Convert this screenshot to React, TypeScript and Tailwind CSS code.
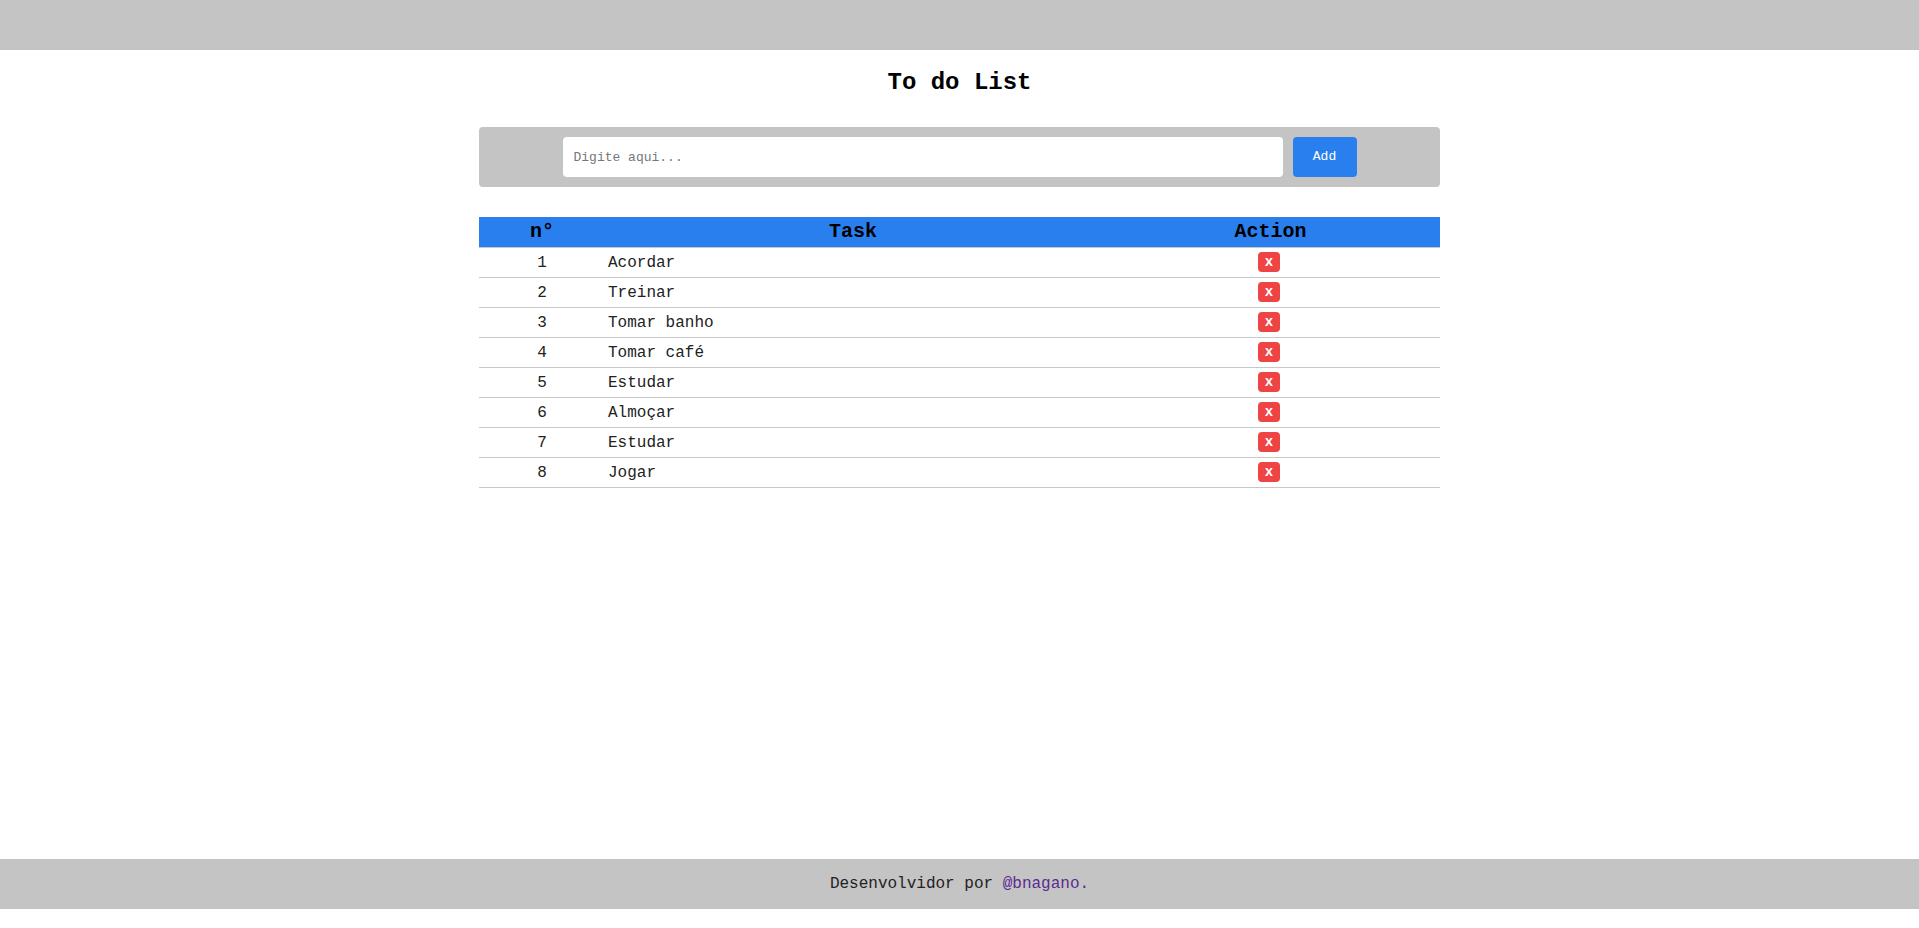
import { useState } from "react"

type Task = {
  id: number
  title: string
}

const initialTasks: Task[] = [
  { id: 1, title: "Acordar" },
  { id: 2, title: "Treinar" },
  { id: 3, title: "Tomar banho" },
  { id: 4, title: "Tomar café" },
  { id: 5, title: "Estudar" },
  { id: 6, title: "Almoçar" },
  { id: 7, title: "Estudar" },
  { id: 8, title: "Jogar" },
]

export default function App() {
  const [tasks, setTasks] = useState<Task[]>(initialTasks)
  const [text, setText] = useState("")

  const addTask = () => {
    if (!text.trim()) return
    setTasks([...tasks, { id: Date.now(), title: text.trim() }])
    setText("")
  }

  const removeTask = (id: number) => {
    setTasks(tasks.filter((t) => t.id !== id))
  }

  return (
    <div className="bg-white text-[#222] font-['Liberation_Mono','Courier_New',monospace]">
      <header className="h-[50px] bg-[#c4c4c4]" />

      <main className="min-h-[809px] pt-[19px]">
        <h1 className="text-center text-[24px] leading-[28px] font-bold text-black">To do List</h1>

        <div className="mx-auto mt-[30px] w-[961px]">
          <div className="flex h-[60px] items-center justify-center gap-[10px] rounded-[4px] bg-[#c4c4c4]">
            <input
              value={text}
              onChange={(e) => setText(e.target.value)}
              onKeyDown={(e) => e.key === "Enter" && addTask()}
              placeholder="Digite aqui..."
              className="h-[40px] w-[720px] rounded-[4px] bg-white px-[11px] text-[13px] outline-none placeholder:text-[#777]"
            />
            <button
              onClick={addTask}
              className="h-[40px] w-[64px] rounded-[4px] bg-[#2a7fef] text-[13px] text-white"
            >
              Add
            </button>
          </div>

          <table className="mt-[30px] w-full table-fixed border-collapse">
            <colgroup>
              <col className="w-[126px]" />
              <col className="w-[496px]" />
              <col />
            </colgroup>
            <thead>
              <tr className="bg-[#2a7fef] text-[20px] text-black">
                <th className="h-[30px] border-b border-[#c8c8c8] p-0 font-bold">n°</th>
                <th className="h-[30px] border-b border-[#c8c8c8] p-0 font-bold">Task</th>
                <th className="h-[30px] border-b border-[#c8c8c8] p-0 font-bold">Action</th>
              </tr>
            </thead>
            <tbody className="text-[16px]">
              {tasks.map((task, index) => (
                <tr key={task.id}>
                  <td className="h-[30px] border-b border-[#c8c8c8] p-0 text-center">{index + 1}</td>
                  <td className="h-[30px] border-b border-[#c8c8c8] p-0 pl-[3px]">{task.title}</td>
                  <td className="h-[30px] border-b border-[#c8c8c8] p-0 pr-[3px] text-center">
                    <button
                      onClick={() => removeTask(task.id)}
                      className="inline-flex h-[20px] w-[22px] items-center justify-center rounded-[4px] bg-[#ef4444] align-middle text-[14px] leading-none font-bold text-white"
                    >
                      x
                    </button>
                  </td>
                </tr>
              ))}
            </tbody>
          </table>
        </div>
      </main>

      <footer className="flex h-[50px] items-center justify-center bg-[#c4c4c4] text-[16px] text-[#222]">
        <span>
          Desenvolvidor por <a href="#" className="text-[#5a2a91]">@bnagano.</a>
        </span>
      </footer>
    </div>
  )
}
